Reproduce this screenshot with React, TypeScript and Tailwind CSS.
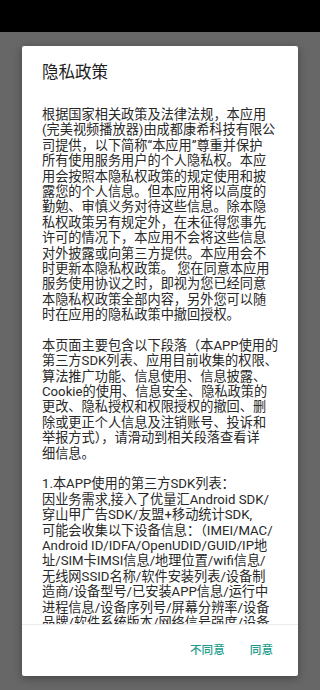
import React from "react";

const lines: string[] = [
  "根据国家相关政策及法律法规，本应用",
  "(完美视频播放器)由成都康希科技有限公",
  "司提供，以下简称“本应用”尊重并保护",
  "所有使用服务用户的个人隐私权。本应",
  "用会按照本隐私权政策的规定使用和披",
  "露您的个人信息。但本应用将以高度的",
  "勤勉、审慎义务对待这些信息。除本隐",
  "私权政策另有规定外，在未征得您事先",
  "许可的情况下，本应用不会将这些信息",
  "对外披露或向第三方提供。本应用会不",
  "时更新本隐私权政策。 您在同意本应用",
  "服务使用协议之时，即视为您已经同意",
  "本隐私权政策全部内容，另外您可以随",
  "时在应用的隐私政策中撤回授权。",
  "",
  "本页面主要包含以下段落（本APP使用的",
  "第三方SDK列表、应用目前收集的权限、",
  "算法推广功能、信息使用、信息披露、",
  "Cookie的使用、信息安全、隐私政策的",
  "更改、隐私授权和权限授权的撤回、删",
  "除或更正个人信息及注销账号、投诉和",
  "举报方式），请滑动到相关段落查看详",
  "细信息。",
  "",
  "1.本APP使用的第三方SDK列表：",
  "因业务需求,接入了优量汇Android SDK/",
  "穿山甲广告SDK/友盟+移动统计SDK,",
  "可能会收集以下设备信息：（IMEI/MAC/",
  "Android ID/IDFA/OpenUDID/GUID/IP地",
  "址/SIM卡IMSI信息/地理位置/wifi信息/",
  "无线网SSID名称/软件安装列表/设备制",
  "造商/设备型号/已安装APP信息/运行中",
  "进程信息/设备序列号/屏幕分辨率/设备",
  "品牌/软件系统版本/网络信号强度/设备",
];

export default function App() {
  return (
    <div
      className="w-[320px] h-[690px] bg-[#676767] flex flex-col overflow-hidden"
      style={{ fontFamily: 'Roboto, "Noto Sans CJK SC", sans-serif' }}
    >
      <div className="h-[32px] bg-black shrink-0" />
      <div className="px-[22px] pt-[14px]">
        <div className="h-[630px] bg-white rounded-[2px] shadow-[0_2px_8px_rgba(0,0,0,0.35)] flex flex-col">
          <div className="h-[61px] pt-[17px] px-[20px] shrink-0">
            <div className="text-[16.5px] leading-[20px] text-[#1e1e1e]">隐私政策</div>
          </div>
          <div className="h-[518px] overflow-hidden px-[20px] border-b border-[#ebebeb] shrink-0">
            {lines.map((l, i) => (
              <div
                key={i}
                className="text-[13.2px] leading-[15.4px] h-[15.4px] text-[#282828] whitespace-nowrap"
              >
                {l}
              </div>
            ))}
          </div>
          <div className="flex-1 flex justify-end items-center pr-[25px] gap-[25px]">
            <span className="text-[11.6px] font-medium text-[#1a9c8b]">不同意</span>
            <span className="text-[11.6px] font-medium text-[#1a9c8b]">同意</span>
          </div>
        </div>
      </div>
    </div>
  );
}
